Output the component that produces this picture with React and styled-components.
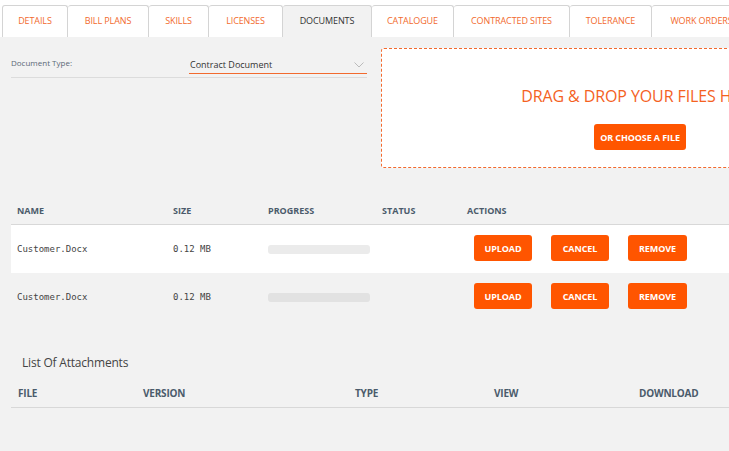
import React from 'react';
import styled, { createGlobalStyle } from 'styled-components';

const GlobalStyle = createGlobalStyle`
  body {
    margin: 0;
    background: #f2f2f2;
    font-family: 'Open Sans', 'Liberation Sans', sans-serif;
    overflow: hidden;
  }
`;

const Page = styled.div`
  width: 900px;
`;

const TabBar = styled.div`
  display: flex;
  background: #ffffff;
  padding: 5px 0 0 2px;
`;

const Tab = styled.div`
  height: 32px;
  width: ${(p) => p.w}px;
  box-sizing: border-box;
  display: flex;
  align-items: center;
  justify-content: center;
  flex-shrink: 0;
  border: 1px solid #d4d4d4;
  border-bottom: none;
  border-left-width: ${(p) => (p.first ? 1 : 0)}px;
  border-radius: 3px 3px 0 0;
  background: ${(p) => (p.active ? '#f2f2f2' : '#ffffff')};
  color: ${(p) => (p.active ? '#333333' : '#f26a2e')};
  font-size: 9px;
  letter-spacing: -0.1px;
  white-space: nowrap;
  padding-bottom: 2px;
`;

const Content = styled.div`
  padding: 0 0 0 11px;
`;

const TopSection = styled.div`
  display: grid;
  grid-template-columns: 356px 518px;
  column-gap: 14px;
  margin-top: 11px;
`;

const FieldRow = styled.div`
  display: flex;
  align-items: flex-start;
  height: 29px;
  border-bottom: 1px solid #dcdcdc;
`;

const Label = styled.div`
  margin-top: 9px;
  width: 178px;
  font-size: 8px;
  line-height: 12px;
  color: #5b6876;
`;

const Select = styled.div`
  margin-top: 10px;
  width: 178px;
  height: 16px;
  box-sizing: border-box;
  border-bottom: 1px solid #f26a2e;
  display: flex;
  justify-content: space-between;
  align-items: center;
  padding: 0 3px 2px 1px;
  font-size: 9px;
  color: #333;
`;

const DropZone = styled.div`
  height: 120px;
  box-sizing: border-box;
  border: 1px dashed #f26a2e;
  border-radius: 3px;
  background: #ffffff;
  display: flex;
  flex-direction: column;
  align-items: center;
  padding-top: 37px;
`;

const DropText = styled.div`
  font-size: 16px;
  line-height: 20px;
  color: #f4621f;
  margin-bottom: 18px;
  white-space: nowrap;
  letter-spacing: -0.1px;
`;

const OrangeButton = styled.button`
  height: 26px;
  width: ${(p) => p.w || 58}px;
  padding: 0;
  border: none;
  border-radius: 3px;
  background: #ff5500;
  color: #ffffff;
  font-family: 'Open Sans', 'Liberation Sans', sans-serif;
  font-size: 9px;
  font-weight: 700;
  letter-spacing: -0.1px;
`;

const Table = styled.div`
  margin-top: 30px;
`;

const Row = styled.div`
  display: grid;
  grid-template-columns: ${(p) => p.cols};
  align-items: center;
  padding-left: ${(p) => p.pad}px;
  height: ${(p) => p.h}px;
  background: ${(p) => (p.white ? '#ffffff' : 'transparent')};
  border-bottom: ${(p) => (p.line ? '1px solid #d8d8d8' : 'none')};
`;

const HeadCell = styled.div`
  font-size: ${(p) => p.size || 9}px;
  font-weight: 700;
  color: #4b5b6b;
  letter-spacing: ${(p) => (p.size ? '-0.2px' : '0')};
  padding-bottom: 2px;
`;

const MonoCell = styled.div`
  font-family: 'DejaVu Sans Mono', 'Liberation Mono', monospace;
  font-size: 9px;
  color: #444;
`;

const Progress = styled.div`
  width: 102px;
  height: 9px;
  border-radius: 3px;
  background: ${(p) => (p.white ? '#ebebeb' : '#e2e2e2')};
`;

const Actions = styled.div`
  display: flex;
  gap: 19px;
  padding-left: 7px;
  padding-bottom: 2px;
`;

const SectionTitle = styled.div`
  margin: 34px 0 10px 11px;
  font-size: 12px;
  line-height: 16px;
  color: #444;
  letter-spacing: -0.2px;
`;

const Chevron = () => (
  <svg width="10" height="6" viewBox="0 0 10 6">
    <path d="M0.5 0.5 L5 5 L9.5 0.5" fill="none" stroke="#bbb" strokeWidth="1" />
  </svg>
);

const tabs = [
  ['DETAILS', 66],
  ['BILL PLANS', 81],
  ['SKILLS', 60],
  ['LICENSES', 74],
  ['DOCUMENTS', 89],
  ['CATALOGUE', 82],
  ['CONTRACTED SITES', 116],
  ['TOLERANCE', 82],
  ['WORK ORDERS', 100],
];

const fileCols = '156px 95px 114px 85px 1fr';
const attCols = '125px 212px 139px 145px 1fr';

const files = [{ white: true }, { white: false }];

const App = () => {
  return (
    <Page>
      <GlobalStyle />
      <TabBar>
        {tabs.map(([t, w], i) => (
          <Tab key={t} w={w} first={i === 0} active={t === 'DOCUMENTS'}>
            {t}
          </Tab>
        ))}
      </TabBar>
      <Content>
        <TopSection>
          <div>
            <FieldRow>
              <Label>Document Type:</Label>
              <Select>
                <span>Contract Document</span>
                <Chevron />
              </Select>
            </FieldRow>
          </div>
          <DropZone>
            <DropText>DRAG &amp; DROP YOUR FILES HERE</DropText>
            <OrangeButton w={92}>OR CHOOSE A FILE</OrangeButton>
          </DropZone>
        </TopSection>

        <Table>
          <Row cols={fileCols} pad={6} h={26} line>
            <HeadCell>NAME</HeadCell>
            <HeadCell>SIZE</HeadCell>
            <HeadCell>PROGRESS</HeadCell>
            <HeadCell>STATUS</HeadCell>
            <HeadCell>ACTIONS</HeadCell>
          </Row>
          {files.map((f, i) => (
            <Row key={i} cols={fileCols} pad={6} h={48} white={f.white}>
              <MonoCell>Customer.Docx</MonoCell>
              <MonoCell>0.12 MB</MonoCell>
              <Progress white={f.white} />
              <div />
              <Actions>
                <OrangeButton>UPLOAD</OrangeButton>
                <OrangeButton>CANCEL</OrangeButton>
                <OrangeButton w={59}>REMOVE</OrangeButton>
              </Actions>
            </Row>
          ))}
        </Table>

        <SectionTitle>List Of Attachments</SectionTitle>
        <Row cols={attCols} pad={7} h={26} line>
          <HeadCell size={10}>FILE</HeadCell>
          <HeadCell size={10}>VERSION</HeadCell>
          <HeadCell size={10}>TYPE</HeadCell>
          <HeadCell size={10}>VIEW</HeadCell>
          <HeadCell size={10}>DOWNLOAD</HeadCell>
        </Row>
      </Content>
    </Page>
  );
};

export default App;
